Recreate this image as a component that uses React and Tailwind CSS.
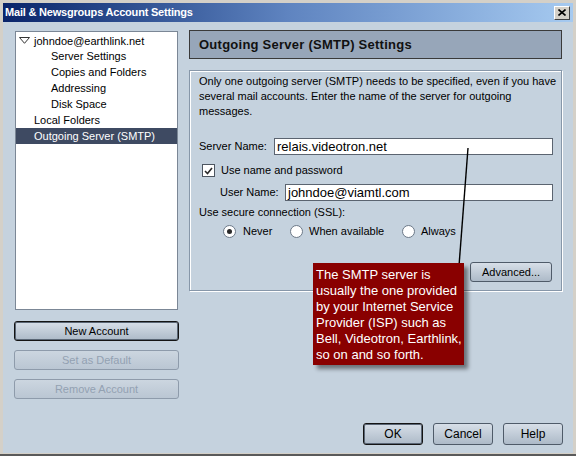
import React from "react";

function Btn({ children, className = "", variant = "normal" }) {
  const base =
    "flex items-center justify-center rounded-[3px] text-[11px] leading-none ";
  const v =
    variant === "default"
      ? "border border-[#141414] shadow-[inset_0_0_0_1px_#5a6675] bg-linear-to-b from-[#d7dfe8] to-[#adbac8] text-black"
      : variant === "disabled"
      ? "border border-[#8e9bab] bg-linear-to-b from-[#ccd6e0] to-[#bac6d3] text-[#93a1b2]"
      : "border border-[#4f5b69] bg-linear-to-b from-[#d7dfe8] to-[#adbac8] text-black";
  return <div className={base + v + " " + className}>{children}</div>;
}

function Radio({ checked }) {
  return (
    <div className="w-[13px] h-[13px] rounded-full bg-white border border-[#6c7988] flex items-center justify-center shrink-0">
      {checked && <div className="w-[5px] h-[5px] rounded-full bg-[#2a2a2a]" />}
    </div>
  );
}

function TreeRow({ children, indent, selected }) {
  return (
    <div
      className={
        "h-[16px] leading-[16px] text-[11px] whitespace-nowrap " +
        indent +
        (selected ? " bg-[#3e4a62] text-white" : " text-black")
      }
    >
      {children}
    </div>
  );
}

export default function App() {
  return (
    <div className="relative w-[576px] h-[456px] bg-[#d4d0c8] flex flex-col pt-[3px] px-[3px] pb-[1px] border-b-[2px] border-b-[#5a5a5a] overflow-hidden font-['Liberation_Sans',Arial,sans-serif] text-black">
      {/* Title bar */}
      <div className="h-[19px] shrink-0 bg-linear-to-r from-[#0a246a] via-[#5f84c0] to-[#a6caf0] flex items-center pl-[2px] pr-[3px]">
        <span className="text-[11px] font-bold text-white tracking-[-0.2px]">
          Mail &amp; Newsgroups Account Settings
        </span>
        <div className="ml-auto w-[16px] h-[14px] bg-[#d4d0c8] border-t border-l border-t-white border-l-white border-b border-r border-b-[#404040] border-r-[#404040] flex items-center justify-center">
          <svg width="8" height="7" viewBox="0 0 8 7">
            <path d="M0.5 0.5 L7.5 6.5 M7.5 0.5 L0.5 6.5" stroke="#000" strokeWidth="1.6" />
          </svg>
        </div>
      </div>

      {/* Body */}
      <div className="flex-1 bg-[#c5d2de] flex flex-col">
        <div className="flex items-start">
          {/* Left column */}
          <div className="ml-[11px] mt-[9px] w-[165px] flex flex-col">
            <div className="mx-[1px] w-[163px] h-[279px] bg-white border border-[#7b8796] flex flex-col">
              <TreeRow indent="pl-[3px]">
                <span className="inline-flex items-center">
                  <svg width="11" height="7" viewBox="0 0 11 7" className="mr-[4px]">
                    <polygon points="0.5,0.5 10.5,0.5 5.5,6.3" fill="#fff" stroke="#333" strokeWidth="1" />
                  </svg>
                  johndoe@earthlink.net
                </span>
              </TreeRow>
              <TreeRow indent="pl-[35px]">Server Settings</TreeRow>
              <TreeRow indent="pl-[35px]">Copies and Folders</TreeRow>
              <TreeRow indent="pl-[35px]">Addressing</TreeRow>
              <TreeRow indent="pl-[35px]">Disk Space</TreeRow>
              <TreeRow indent="pl-[18px]">Local Folders</TreeRow>
              <TreeRow indent="pl-[18px]" selected>
                Outgoing Server (SMTP)
              </TreeRow>
            </div>
            <div className="mt-[11px] flex flex-col gap-[9px]">
              <Btn variant="default" className="h-[20px] w-[165px]">New Account</Btn>
              <Btn variant="disabled" className="h-[20px] w-[165px]">Set as Default</Btn>
              <Btn variant="disabled" className="h-[20px] w-[165px]">Remove Account</Btn>
            </div>
          </div>

          {/* Right column */}
          <div className="ml-[10px] mt-[8px] w-[374px] flex flex-col">
            <div className="w-[373px] h-[29px] bg-[#97a6b9] border border-[#3a3a3a] flex items-center pl-[9px] text-[13px] font-bold tracking-[0.25px] text-[#111]">
              Outgoing Server (SMTP) Settings
            </div>

            <div className="mt-[11px] w-[373px] h-[221px] border border-[#8797a9] shadow-[inset_1px_1px_0_#ffffff,1px_1px_0_#ffffff] flex flex-col text-[11px]">
              <div className="pt-[3px] pl-[9px] leading-[15px] whitespace-nowrap">
                Only one outgoing server (SMTP) needs to be specified, even if you have
                <br />
                several mail accounts. Enter the name of the server for outgoing
                <br />
                messages.
              </div>

              <div className="mt-[19px] flex items-center pl-[9px]">
                <span className="w-[75px] whitespace-nowrap">Server Name:</span>
                <div className="w-[279px] h-[17px] bg-white border border-[#5b6470] flex items-center pl-[2px] text-[13px] leading-none">
                  relais.videotron.net
                </div>
              </div>

              <div className="mt-[9px] flex items-center pl-[12px] h-[13px]">
                <div className="w-[13px] h-[13px] bg-white border border-[#4c5560] flex items-center justify-center">
                  <svg width="9" height="8" viewBox="0 0 9 8">
                    <path d="M1 4 L3.5 6.5 L8 1" fill="none" stroke="#2a2a2a" strokeWidth="1.6" />
                  </svg>
                </div>
                <span className="ml-[6px]">Use name and password</span>
              </div>

              <div className="mt-[7px] flex items-center pl-[30px]">
                <span className="w-[65px] whitespace-nowrap">User Name:</span>
                <div className="w-[268px] h-[17px] bg-white border border-[#5b6470] flex items-center pl-[2px] text-[13px] leading-none">
                  johndoe@viamtl.com
                </div>
              </div>

              <div className="mt-[4px] pl-[9px] leading-[14px]">Use secure connection (SSL):</div>

              <div className="mt-[6px] flex items-center pl-[33px] h-[13px]">
                <div className="w-[67px] flex items-center">
                  <Radio checked />
                  <span className="ml-[7px]">Never</span>
                </div>
                <div className="w-[112px] flex items-center">
                  <Radio />
                  <span className="ml-[6px]">When available</span>
                </div>
                <div className="flex items-center">
                  <Radio />
                  <span className="ml-[6px]">Always</span>
                </div>
              </div>

              <div className="mt-[24px] flex justify-end pr-[9px]">
                <Btn className="w-[82px] h-[20px]">Advanced...</Btn>
              </div>
            </div>
          </div>
        </div>

        <div className="mt-auto flex justify-end gap-[10px] pr-[10px] pb-[8px]">
          <Btn variant="default" className="w-[60px] h-[22px] text-[12px]">OK</Btn>
          <Btn className="w-[60px] h-[22px] text-[12px]">Cancel</Btn>
          <Btn className="w-[60px] h-[22px] text-[12px]">Help</Btn>
        </div>
      </div>

      {/* Pointer line */}
      <svg className="absolute left-0 top-0 pointer-events-none" width="576" height="456">
        <line x1="468" y1="148" x2="459" y2="266" stroke="#000" strokeWidth="1.4" />
      </svg>

      {/* Callout */}
      <div className="absolute left-[313px] top-[263px] w-[151px] h-[102px] bg-[#890000] shadow-[4px_4px_4px_rgba(0,0,0,0.45)] pl-[3px] pt-[4px] text-white text-[13px] leading-[16px] whitespace-nowrap">
        The SMTP server is
        <br />
        usually the one provided
        <br />
        by your Internet Service
        <br />
        Provider (ISP) such as
        <br />
        Bell, Videotron, Earthlink,
        <br />
        so on and so forth.
      </div>
    </div>
  );
}
